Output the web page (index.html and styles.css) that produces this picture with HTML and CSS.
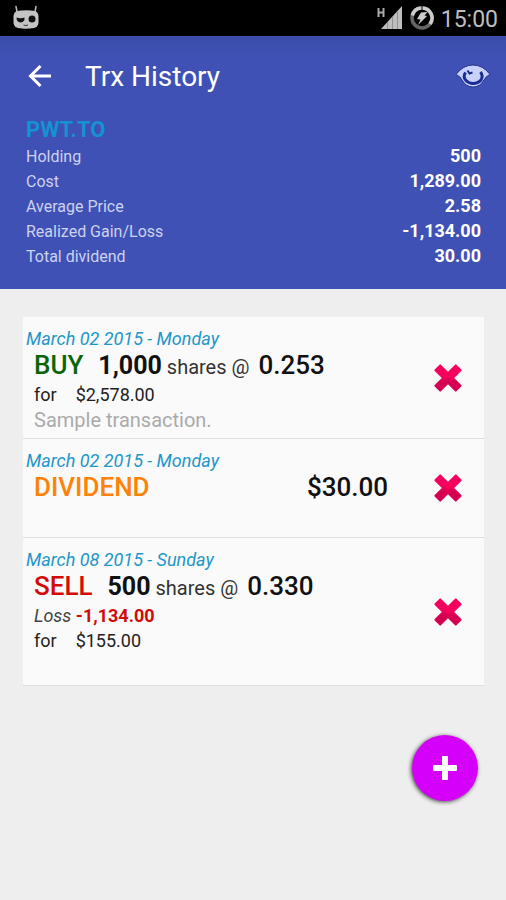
FILE: index.html
```html
<!DOCTYPE html>
<html lang="en">
<head>
<meta charset="utf-8">
<meta name="viewport" content="width=device-width, initial-scale=1">
<title>Trx History</title>
<link rel="stylesheet" href="styles.css">
</head>
<body>
<svg class="defs" width="0" height="0" aria-hidden="true">
  <defs>
    <linearGradient id="cross-fill" x1="0" y1="0" x2="0" y2="1">
      <stop offset="0.45" stop-color="#f5005c"/>
      <stop offset="0.65" stop-color="#d50050"/>
    </linearGradient>
    <symbol id="cross" viewBox="0 0 28 28">
      <path fill="url(#cross-fill)" d="M5.500.7Q6.200 0 6.900.7L14 7.800 21.100.7Q21.800 0 22.500.7L27.300 5.500Q28 6.200 27.300 6.900L20.200 14 27.300 21.100Q28 21.800 27.300 22.500L22.500 27.300Q21.800 28 21.100 27.300L14 20.200 6.900 27.300Q6.200 28 5.500 27.300L.7 22.500Q0 21.800.7 21.100L7.800 14 .7 6.900Q0 6.200.7 5.500Z"/>
    </symbol>
  </defs>
</svg>

<div class="status">
  <svg class="robot" viewBox="0 0 28 26" width="28" height="26" aria-hidden="true">
    <path d="M4 1.500 5 7M24 1.500 23 7" stroke="#bdbdbd" stroke-width="1.500" stroke-linecap="round"/>
    <path d="M5 6Q14 4.500 23 6 26 7 26.500 11V18Q26 22 22 23 14 24.500 6 23 2 22 1.500 18V11Q2 7 5 6Z" fill="#c4c4c4"/>
    <path d="M4.500 12.500Q8.500 14 12.500 12.500 13 17 8.500 17.500 4.500 17 4.500 12.500Z" fill="#111"/>
    <circle cx="20" cy="14" r="3.500" fill="#111"/>
    <path d="M11.500 20Q14 21 16 20" stroke="#333" fill="none"/>
  </svg>
  <div class="status-right">
    <svg viewBox="0 0 26 24" width="26" height="24" aria-hidden="true">
      <path d="M1.500 2v9M6.500 2v9M1.500 6.500h5" stroke="#aaa" stroke-width="2" fill="none"/>
      <path d="M25 0V23H4Z" fill="#bebebe"/>
      <path d="M10.500 16v7M15.500 11v12M20.500 6v17" stroke="#909090" fill="none"/>
    </svg>
    <svg viewBox="0 0 26 24" width="26" height="24" aria-hidden="true">
      <circle cx="13" cy="12" r="10" fill="none" stroke="#666" stroke-width="3.500"/>
      <path d="M3.300 9.500A10 10 0 0 1 12 2M14 2A10 10 0 0 1 21 18" fill="none" stroke="#ccc" stroke-width="3.500"/>
      <path d="M12 6.500 18.500 6 15.500 9.500 18 10 9 19 11.500 13.500 8 13Z" fill="#ccc"/>
    </svg>
    <span class="clock">15:00</span>
  </div>
</div>

<header class="header">
  <div class="toolbar">
    <button class="icon-button" type="button" aria-label="Back">
      <svg viewBox="0 0 24 24" width="24" height="24"><path d="M23 12H2.500M12.500 2 2.500 12 12.500 22" fill="none" stroke="#fff" stroke-width="3"/></svg>
    </button>
    <h1>Trx History</h1>
    <button class="icon-button" type="button" aria-label="View">
      <svg viewBox="0 0 36 24" width="36" height="24">
        <path d="M1 10.500Q8 1 18 1 28 1 35 10.500 31 12 29 16 25 23 18 23 11 23 7 16 5 12 1 10.500Z" fill="#c8d1fa" stroke="#23318c" stroke-width="1"/>
        <path d="M10.500 8.500Q7.500 13 11 16.500 14 19.500 18 19.500 23 19.500 26 16 28.500 12 25.500 8" fill="none" stroke="#1c2c91" stroke-width="3"/>
        <path d="M12.500 6.500 14.500 9.500 17.500 8.500" fill="none" stroke="#1c2c91" stroke-width="2"/>
      </svg>
    </button>
  </div>
  <section class="summary">
    <h2>PWT.TO</h2>
    <dl>
      <div><dt>Holding</dt><dd>500</dd></div>
      <div><dt>Cost</dt><dd>1,289.00</dd></div>
      <div><dt>Average Price</dt><dd>2.58</dd></div>
      <div><dt>Realized Gain/Loss</dt><dd>-1,134.00</dd></div>
      <div><dt>Total dividend</dt><dd>30.00</dd></div>
    </dl>
  </section>
</header>

<main>
  <ul class="list">
    <li class="trx">
      <div class="details">
        <p class="date">March 02 2015 - Monday</p>
        <p class="main"><span class="kind buy">BUY</span><b class="quantity">1,000</b> shares @ <b class="price">0.253</b></p>
        <p class="line total"><span>for</span><span>$2,578.00</span></p>
        <p class="note">Sample transaction.</p>
      </div>
      <button class="delete" type="button" aria-label="Delete"><svg width="28" height="28"><use href="#cross"/></svg></button>
    </li>
    <li class="trx short">
      <div class="details">
        <p class="date">March 02 2015 - Monday</p>
        <p class="main spread"><span class="kind dividend">DIVIDEND</span><b class="price">$30.00</b></p>
      </div>
      <button class="delete" type="button" aria-label="Delete"><svg width="28" height="28"><use href="#cross"/></svg></button>
    </li>
    <li class="trx tall">
      <div class="details">
        <p class="date">March 08 2015 - Sunday</p>
        <p class="main"><span class="kind sell">SELL</span><b class="quantity">500</b> shares @ <b class="price">0.330</b></p>
        <p class="line"><i>Loss</i> <b class="loss">-1,134.00</b></p>
        <p class="line total"><span>for</span><span>$155.00</span></p>
      </div>
      <button class="delete" type="button" aria-label="Delete"><svg width="28" height="28"><use href="#cross"/></svg></button>
    </li>
  </ul>
</main>

<button class="fab" type="button" aria-label="Add transaction">
  <svg viewBox="0 0 26 26" width="26" height="26"><path d="M11 1H15Q16 1 16 2V10H24Q25 10 25 11V15Q25 16 24 16H16V24Q16 25 15 25H11Q10 25 10 24V16H2Q1 16 1 15V11Q1 10 2 10H10V2Q10 1 11 1Z" fill="#fff"/></svg>
</button>
</body>
</html>
```

FILE: styles.css
```css
* {
  box-sizing: border-box;
  margin: 0;
  padding: 0;
}

body {
  min-height: 100vh;
  background: #eee;
  color: #111;
  font-family: Roboto, "Liberation Sans", sans-serif;
}

button {
  border: 0;
  background: none;
  cursor: pointer;
}

svg {
  display: block;
}

.defs {
  position: absolute;
}

.status {
  display: flex;
  align-items: center;
  justify-content: space-between;
  height: 36px;
  padding: 0 8px 0 12px;
  background: #000;
}

.status-right {
  display: flex;
  align-items: center;
  gap: 6px;
}

.clock {
  padding-top: 3px;
  color: #bebebe;
  font-size: 23px;
  line-height: 33px;
}

.header {
  padding: 0 25px 20px 26px;
  background: linear-gradient(#3c4da8, #3f51b5 20px);
  color: #fff;
}

.toolbar {
  display: flex;
  align-items: center;
  height: 80px;
  margin-right: -12px;
}

h1 {
  flex: 1;
  margin-left: 31px;
  font-size: 28px;
  font-weight: 400;
}

.icon-button {
  padding: 0 2px;
}

.summary h2 {
  color: #1592d0;
  font-size: 22px;
  font-weight: 700;
  line-height: 28px;
}

.summary dl > div {
  display: flex;
  align-items: baseline;
  justify-content: space-between;
  line-height: 24px;
}

dt {
  color: #ccd2ef;
  font-size: 16px;
}

dd {
  font-size: 18px;
  font-weight: 700;
}

main {
  padding: 28px 22px 0 23px;
}

.list {
  background: #fafafa;
  list-style: none;
}

.trx {
  display: flex;
  align-items: center;
  min-height: 122px;
  border-bottom: 1px solid #dedede;
}

.short {
  min-height: 99px;
}

.tall {
  min-height: 148px;
}

.details {
  flex: 1;
  align-self: stretch;
  padding: 11px 0 0 11px;
}

.date {
  margin-left: -8px;
  color: #1e96c8;
  font-size: 18px;
  font-style: italic;
  line-height: 22px;
}

.main {
  color: #333;
  font-size: 20px;
  line-height: 30px;
}

.kind,
.price {
  font-size: 26px;
  font-weight: 500;
}

.kind {
  margin-right: 15px;
}

.quantity,
.price {
  color: #111;
}

.quantity {
  font-size: 25px;
  font-weight: 700;
}

.main .price {
  margin-left: 4px;
}

.spread {
  display: flex;
  justify-content: space-between;
  margin-right: 24px;
}

.buy {
  color: #0a640a;
}

.dividend {
  color: #ff8208;
}

.sell {
  color: #d20a0a;
}

.line {
  font-size: 18px;
  line-height: 25px;
}

.line i {
  color: #444;
}

.total {
  display: flex;
  gap: 19px;
  color: #222;
}

.loss {
  color: #d20a0a;
  font-weight: 700;
}

.note {
  color: #aaa;
  font-size: 20px;
  line-height: 27px;
}

.delete {
  flex: none;
  padding: 12px 22px;
}

.fab {
  position: fixed;
  right: 28px;
  bottom: 99px;
  display: grid;
  place-items: center;
  width: 66px;
  height: 66px;
  border-radius: 50%;
  background: #d500f9;
  box-shadow: -1px 1px 4px rgba(0, 0, 0, 0.7);
}
```
